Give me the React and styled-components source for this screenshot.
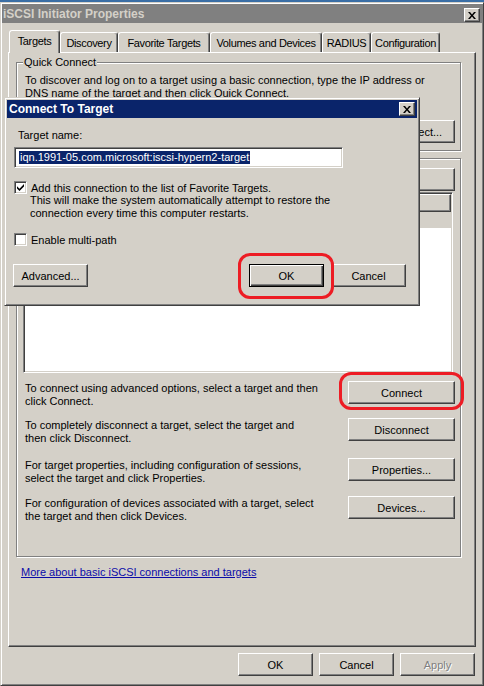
import React from "react";
import styled, { createGlobalStyle } from "styled-components";

const GlobalStyle = createGlobalStyle`
  * { box-sizing: border-box; }
  html, body {
    margin: 0;
    padding: 0;
    background: #3a6ea5;
  }
  body {
    font-family: "Liberation Sans", Arial, sans-serif;
    font-size: 11px;
    color: #000;
    overflow: hidden;
  }
`;

const Screen = styled.div`
  position: relative;
  width: 484px;
  height: 686px;
  padding-top: 2px;
  overflow: hidden;
`;

const Frame = styled.div`
  background: #d4d0c8;
  border: 1px solid;
  border-color: #d4d0c8 #404040 #404040 #d4d0c8;
  box-shadow: inset 1px 1px #fff, inset -1px -1px #808080;
`;

const Window = styled(Frame)`
  width: 484px;
  height: 684px;
  padding: 1px;
  display: flex;
  flex-direction: column;
`;

const Dialog = styled(Frame)`
  position: absolute;
  left: 4px;
  top: 97px;
  width: 416px;
  height: 209px;
  padding: 2px;
  display: flex;
  flex-direction: column;
`;

const TitleBar = styled.div`
  height: ${(p) => p.$h}px;
  flex-shrink: 0;
  display: flex;
  align-items: center;
  justify-content: space-between;
  padding: 0 2px 0 ${(p) => p.$pl}px;
  background: ${(p) => (p.$active ? "#0a246a" : "#808080")};
  color: ${(p) => (p.$active ? "#fff" : "#d4d0c8")};
  font-weight: bold;
  font-size: 12px;
  white-space: nowrap;
`;

const CaptionButton = styled.div`
  width: 16px;
  height: 14px;
  background: #d4d0c8;
  border: 1px solid;
  border-color: #fff #404040 #404040 #fff;
  box-shadow: inset -1px -1px #808080;
  display: flex;
  align-items: center;
  justify-content: center;
  align-self: ${(p) => (p.$bottom ? "flex-end" : "center")};
  margin-bottom: ${(p) => (p.$bottom ? 1 : 0)}px;
  padding-right: 1px;
`;

const Body = styled.div`
  flex: 1;
  display: flex;
  flex-direction: column;
  padding: 7px 6px 0 6px;
`;

const TabStrip = styled.div`
  height: 22px;
  display: flex;
  align-items: flex-end;
  padding-left: 1px;
  position: relative;
  z-index: 1;
`;

const Tab = styled.div`
  width: ${(p) => p.$w}px;
  height: ${(p) => (p.$active ? 23 : 20)}px;
  margin-bottom: ${(p) => (p.$active ? -1 : 0)}px;
  padding-bottom: ${(p) => (p.$active ? 2 : 0)}px;
  background: #d4d0c8;
  border: 1px solid;
  border-bottom: none;
  border-color: #fff #404040 transparent #fff;
  box-shadow: inset -1px 0 #808080;
  border-radius: 3px 3px 0 0;
  display: flex;
  align-items: center;
  justify-content: center;
  white-space: nowrap;
  letter-spacing: -0.35px;
  flex-shrink: 0;
`;

const TabPanel = styled.div`
  height: 595px;
  flex-shrink: 0;
  border: 1px solid;
  border-color: #fff #404040 #404040 #fff;
  box-shadow: inset -1px -1px #808080;
  padding: 9px 14px 0 7px;
  display: flex;
  flex-direction: column;
`;

const GroupFrame = styled.div`
  height: ${(p) => p.$h}px;
  margin-top: ${(p) => p.$mt || 0}px;
  border: 1px solid #808080;
  box-shadow: inset 1px 1px #fff, 1px 1px #fff;
  padding: 0 5px 0 8px;
  display: flex;
  flex-direction: column;
`;

const Legend = styled.div`
  align-self: flex-start;
  margin: -7px 0 0 -2px;
  padding: 0 1px;
  background: #d4d0c8;
  line-height: 13px;
`;

const Lines = styled.div`
  line-height: 13px;
  white-space: nowrap;
  margin-top: ${(p) => p.$mt || 0}px;
  margin-left: ${(p) => p.$ml || 0}px;
`;

const Row = styled.div`
  display: flex;
  align-items: ${(p) => p.$align || "center"};
  justify-content: ${(p) => p.$justify || "space-between"};
  margin-top: ${(p) => p.$mt || 0}px;
  margin-left: ${(p) => p.$ml || 0}px;
  gap: ${(p) => p.$gap || 0}px;
`;

const TextBox = styled.div`
  width: ${(p) => p.$w}px;
  height: ${(p) => p.$h}px;
  background: #fff;
  border: 1px solid;
  border-color: #808080 #fff #fff #808080;
  box-shadow: inset 1px 1px #404040, inset -1px -1px #d4d0c8;
  padding: 0 3px 0 4px;
  display: flex;
  align-items: center;
  white-space: nowrap;
`;

const Selected = styled.span`
  background: #0a246a;
  color: #fff;
  line-height: 13px;
  padding: 0 1px;
`;

const Button = styled.button`
  width: ${(p) => p.$w || 75}px;
  height: 23px;
  flex-shrink: 0;
  padding: 0;
  font: inherit;
  color: ${(p) => (p.disabled ? "#808080" : "#000")};
  text-shadow: ${(p) => (p.disabled ? "1px 1px #fff" : "none")};
  background: #d4d0c8;
  border: 1px solid;
  border-color: ${(p) => (p.$default ? "#000" : "#fff #404040 #404040 #fff")};
  box-shadow: ${(p) =>
    p.$default
      ? "inset 1px 1px #fff, inset -1px -1px #404040, inset -2px -2px #808080"
      : "inset -1px -1px #808080"};
  margin-left: ${(p) => (p.$push ? "auto" : "0")};
`;

const Marked = styled.div`
  position: relative;
  flex-shrink: 0;
  margin-left: ${(p) => (p.$push ? "auto" : "0")};
`;

const Ring = styled.span`
  position: absolute;
  inset: ${(p) => p.$inset};
  border: 3px solid #ed1c24;
  border-radius: 12px;
  pointer-events: none;
`;

const ListView = styled.div`
  height: 181px;
  margin: 1px 2px 0 -2px;
  background: #fff;
  border: 1px solid;
  border-color: #808080 #fff #fff #808080;
  box-shadow: inset 1px 1px #404040, inset -1px -1px #d4d0c8;
  padding: 1px;
  display: flex;
  flex-direction: column;
`;

const HeaderRow = styled.div`
  display: flex;
  height: 18px;
`;

const HeaderCell = styled.div`
  flex: ${(p) => (p.$w ? `0 0 ${p.$w}px` : "1")};
  background: #d4d0c8;
  border: 1px solid;
  border-color: #fff #404040 #404040 #fff;
  box-shadow: inset -1px -1px #808080;
`;

const ItemRow = styled.div`
  height: 16px;
  background: ${(p) => (p.$selected ? "#d4d0c8" : "transparent")};
`;

const Link = styled.a`
  align-self: flex-start;
  margin: 9px 0 0 5px;
  line-height: 13px;
  color: #0b0ba8;
  text-decoration: underline;
  white-space: nowrap;
`;

const Footer = styled.div`
  display: flex;
  justify-content: flex-end;
  gap: 6px;
  margin: 6px 1px 0 0;
`;

const DialogBody = styled.div`
  display: flex;
  flex-direction: column;
  padding: 0 11px 0 7px;
`;

const CheckRow = styled.div`
  display: flex;
  align-items: center;
  gap: 4px;
  height: 13px;
  margin-top: ${(p) => p.$mt}px;
  white-space: nowrap;
`;

const CheckBox = styled.div`
  width: 13px;
  height: 13px;
  flex-shrink: 0;
  background: #fff;
  border: 1px solid;
  border-color: #808080 #fff #fff #808080;
  box-shadow: inset 1px 1px #404040, inset -1px -1px #d4d0c8;
  display: flex;
  align-items: center;
  justify-content: center;
`;

const CloseGlyph = () => (
  <svg width="8" height="7" viewBox="0 0 8 7">
    <path d="M0 0h2l2 2.4L6 0h2L5 3.5 8 7H6L4 4.6 2 7H0l3-3.5z" fill="#000" />
  </svg>
);

const CheckGlyph = () => (
  <svg width="7" height="7" viewBox="0 0 7 7">
    <path d="M0 2.3l2.5 2.4L7 0v2.6L2.5 7 0 4.6z" fill="#000" />
  </svg>
);

const tabs = [
  ["Targets", 51],
  ["Discovery", 58],
  ["Favorite Targets", 92],
  ["Volumes and Devices", 112],
  ["RADIUS", 49],
  ["Configuration", 69],
];

const actions = [
  {
    mt: 8,
    lines: ["To connect using advanced options, select a target and then", "click Connect."],
    button: "Connect",
    ring: "-9px -9px -6px -9px",
  },
  {
    mt: 10,
    lines: ["To completely disconnect a target, select the target and", "then click Disconnect."],
    button: "Disconnect",
  },
  {
    mt: 13,
    lines: ["For target properties, including configuration of sessions,", "select the target and click Properties."],
    button: "Properties...",
  },
  {
    mt: 11,
    lines: ["For configuration of devices associated with a target, select", "the target and then click Devices."],
    button: "Devices...",
  },
];

const App = () => {
  return (
    <Screen>
      <GlobalStyle />
      <Window>
        <TitleBar $h={19} $pl={1}>
          <span>iSCSI Initiator Properties</span>
          <CaptionButton $bottom>
            <CloseGlyph />
          </CaptionButton>
        </TitleBar>
        <Body>
          <TabStrip>
            {tabs.map(([name, w], i) => (
              <Tab key={name} $w={w} $active={i === 0}>
                {name}
              </Tab>
            ))}
          </TabStrip>
          <TabPanel>
            <GroupFrame $h={89}>
              <Legend>Quick Connect</Legend>
              <Lines $mt={5}>
                To discover and log on to a target using a basic connection, type the IP address or
                <br />
                DNS name of the target and then click Quick Connect.
              </Lines>
              <Row $mt={20} $justify="flex-end">
                <Button $w={107}>Quick Connect...</Button>
              </Row>
            </GroupFrame>
            <GroupFrame $h={399} $mt={7}>
              <Row $mt={9} $justify="flex-end">
                <Button $w={107} aria-label="Refresh" />
              </Row>
              <ListView>
                <HeaderRow>
                  <HeaderCell $w={300} />
                  <HeaderCell />
                </HeaderRow>
                <ItemRow $selected />
              </ListView>
              {actions.map((a) => (
                <Row key={a.button} $mt={a.mt} $align="flex-start">
                  <Lines $mt={1}>
                    {a.lines[0]}
                    <br />
                    {a.lines[1]}
                  </Lines>
                  <Marked>
                    <Button $w={107}>{a.button}</Button>
                    {a.ring && <Ring $inset={a.ring} />}
                  </Marked>
                </Row>
              ))}
            </GroupFrame>
            <Link href="#">More about basic iSCSI connections and targets</Link>
          </TabPanel>
          <Footer>
            <Button>OK</Button>
            <Button>Cancel</Button>
            <Button disabled>Apply</Button>
          </Footer>
        </Body>
      </Window>

      <Dialog>
        <TitleBar $h={18} $pl={2} $active>
          <span>Connect To Target</span>
          <CaptionButton>
            <CloseGlyph />
          </CaptionButton>
        </TitleBar>
        <DialogBody>
          <Lines $mt={11} $ml={4}>
            Target name:
          </Lines>
          <Row $mt={5}>
            <TextBox $w={329} $h={21}>
              <Selected>iqn.1991-05.com.microsoft:iscsi-hypern2-target</Selected>
            </TextBox>
          </Row>
          <CheckRow $mt={13}>
            <CheckBox>
              <CheckGlyph />
            </CheckBox>
            <span>Add this connection to the list of Favorite Targets.</span>
          </CheckRow>
          <Lines $ml={16}>
            This will make the system automatically attempt to restore the
            <br />
            connection every time this computer restarts.
          </Lines>
          <CheckRow $mt={13}>
            <CheckBox />
            <span>Enable multi-path</span>
          </CheckRow>
          <Row $mt={18} $ml={-1} $gap={7}>
            <Button>Advanced...</Button>
            <Marked $push>
              <Button $default>OK</Button>
              <Ring $inset="-11px -10px -12px -11px" />
            </Marked>
            <Button>Cancel</Button>
          </Row>
        </DialogBody>
      </Dialog>
    </Screen>
  );
};

export default App;
